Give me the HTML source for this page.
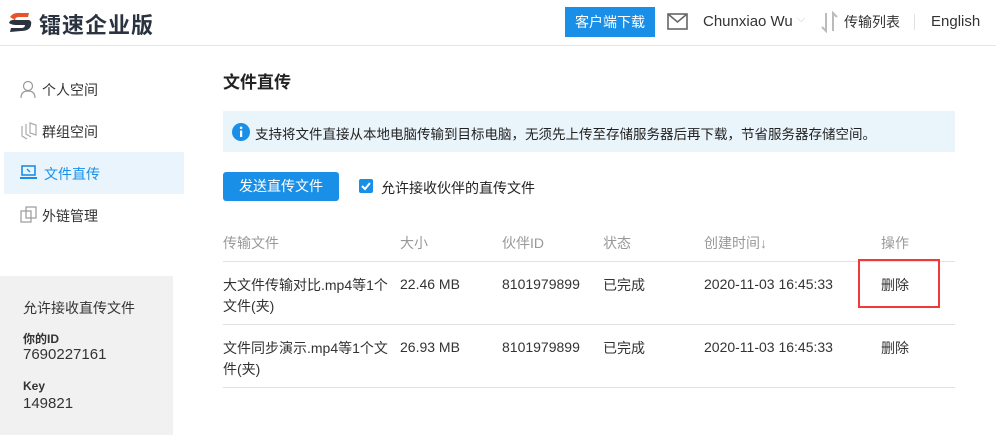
<!DOCTYPE html>
<html><head><meta charset="utf-8"><style>
*{margin:0;padding:0;box-sizing:border-box}
body{width:996px;height:442px;background:#fff;font-family:"Liberation Sans","Noto Sans CJK SC",sans-serif;color:#333;font-size:14px;position:relative;overflow:hidden}
.a{position:absolute;white-space:nowrap}
.hdr{position:absolute;left:0;top:0;width:996px;height:46px;border-bottom:1px solid #e6e6e6}
.th{color:#999;font-size:14px}
.line{position:absolute;left:223px;width:732px;height:1px;background:#e2e2e2}
.n{margin-top:2px}
</style></head><body>
<div class="hdr"></div>
<svg class="a" style="left:7px;top:11px" width="26" height="24" viewBox="0 0 26 24"><path d="M3 6 Q6 1 14 2 L22 2 L21 6 L12 6 Q8 6 8 9Z" fill="#e8542a"/><path d="M2 12 Q3 8 10 9 L22 9 Q25 10 24 14 Q23 20 14 20 L3 21 L4 17 L14 17 Q18 17 18 14 L9 14 Q5 14 2 12Z" fill="#2b3240"/></svg>
<div class="a" style="left:39px;top:8px;font-size:22px;font-weight:bold;color:#2b3240;letter-spacing:1px">镭速企业版</div>
<div class="a" style="left:565px;top:7px;width:90px;height:30px;background:#1a8fe8;color:#fff;font-size:14px;line-height:30px;text-align:center">客户端下载</div>
<svg class="a" style="left:667px;top:13px" width="21" height="17" viewBox="0 0 21 17"><rect x="1" y="1" width="19" height="15" fill="none" stroke="#666" stroke-width="1.6"/><path d="M1 1 L10.5 9 L20 1" fill="none" stroke="#666" stroke-width="1.6"/></svg>
<div class="a" style="left:703px;top:13px;font-size:15px;color:#333">Chunxiao Wu</div>
<div class="a" style="left:797px;top:13px;font-size:11px;color:#ccc">⌵</div>
<svg class="a" style="left:820px;top:11px" width="20" height="22" viewBox="0 0 20 22"><path d="M6 2 V20 L2 16 M13 20 V2 L17 6" fill="none" stroke="#bbb" stroke-width="2"/></svg>
<div class="a" style="left:844px;top:12px;font-size:14px">传输列表</div>
<div class="a" style="left:914px;top:14px;width:1px;height:16px;background:#e0e0e0"></div>
<div class="a" style="left:931px;top:13px;font-size:15px">English</div>

<svg class="a" style="left:20px;top:80px" width="16" height="18" viewBox="0 0 16 18"><circle cx="8" cy="6" r="4.5" fill="none" stroke="#999" stroke-width="1.2"/><path d="M1 18 Q1 11 8 11 Q15 11 15 18" fill="none" stroke="#999" stroke-width="1.2"/></svg>
<div class="a" style="left:42px;top:80px">个人空间</div>
<svg class="a" style="left:20px;top:122px" width="18" height="18" viewBox="0 0 18 18"><path d="M2 4 V14 L7 17 M6 2 V12 L11 15 M10 1 L16 3 V13 L10 11Z" fill="none" stroke="#aaa" stroke-width="1.2"/></svg>
<div class="a" style="left:42px;top:122px">群组空间</div>
<div class="a" style="left:4px;top:152px;width:180px;height:42px;background:#e9f4fd"></div>
<svg class="a" style="left:20px;top:165px" width="17" height="15" viewBox="0 0 17 15"><rect x="2" y="1" width="13" height="9" fill="none" stroke="#1a8fe8" stroke-width="1.6"/><path d="M0 13 H17" stroke="#1a8fe8" stroke-width="2"/><path d="M7 4 L10 7" stroke="#1a8fe8" stroke-width="1.4"/></svg>
<div class="a" style="left:44px;top:164px;color:#1a8fe8">文件直传</div>
<svg class="a" style="left:20px;top:206px" width="17" height="17" viewBox="0 0 17 17"><rect x="1" y="5" width="10" height="11" fill="none" stroke="#999" stroke-width="1.2"/><rect x="6" y="1" width="10" height="11" fill="none" stroke="#999" stroke-width="1.2"/></svg>
<div class="a" style="left:42px;top:206px">外链管理</div>
<div class="a" style="left:0;top:276px;width:173px;height:159px;background:#f1f1f1"></div>
<div class="a" style="left:23px;top:298px;font-size:14px">允许接收直传文件</div>
<div class="a" style="left:23px;top:330px;font-size:12px;font-weight:bold">你的ID</div>
<div class="a" style="left:23px;top:346px;font-size:15px">7690227161</div>
<div class="a" style="left:23px;top:379px;font-size:12px;font-weight:bold">Key</div>
<div class="a" style="left:23px;top:395px;font-size:15px">149821</div>

<div class="a" style="left:223px;top:68px;font-size:17px;font-weight:bold;color:#222">文件直传</div>
<div class="a" style="left:223px;top:111px;width:732px;height:41px;background:#eaf4fb"></div>
<svg class="a" style="left:232px;top:123px" width="18" height="18" viewBox="0 0 18 18"><circle cx="9" cy="9" r="9" fill="#1a8fe8"/><rect x="8" y="7.5" width="2.2" height="6.5" fill="#fff"/><circle cx="9.1" cy="4.8" r="1.3" fill="#fff"/></svg>
<div class="a" style="left:255px;top:123px;font-size:13.5px;color:#222">支持将文件直接从本地电脑传输到目标电脑，无须先上传至存储服务器后再下载，节省服务器存储空间。</div>
<div class="a" style="left:223px;top:172px;width:116px;height:29px;background:#1a8fe8;border-radius:3px;color:#fff;font-size:14px;line-height:29px;text-align:center">发送直传文件</div>
<div class="a" style="left:359px;top:179px;width:14px;height:14px;background:#1a8fe8;border-radius:2px"></div>
<svg class="a" style="left:359px;top:179px" width="14" height="14" viewBox="0 0 14 14"><path d="M3 7 L6 10 L11 4" fill="none" stroke="#fff" stroke-width="2"/></svg>
<div class="a" style="left:381px;top:178px;font-size:14px;color:#222">允许接收伙伴的直传文件</div>

<div class="a th" style="left:223px;top:233px">传输文件</div>
<div class="a th" style="left:400px;top:233px">大小</div>
<div class="a th" style="left:502px;top:233px">伙伴ID</div>
<div class="a th" style="left:603px;top:233px">状态</div>
<div class="a th" style="left:704px;top:233px">创建时间↓</div>
<div class="a th" style="left:881px;top:233px">操作</div>
<div class="line" style="top:261px"></div>
<div class="a" style="left:223px;top:275px;line-height:21px">大文件传输对比.mp4等1个<br>文件(夹)</div>
<div class="a" style="left:400px;top:276px">22.46 MB</div>
<div class="a" style="left:502px;top:276px">8101979899</div>
<div class="a" style="left:603px;top:275px">已完成</div>
<div class="a" style="left:704px;top:276px">2020-11-03 16:45:33</div>
<div class="a" style="left:858px;top:259px;width:82px;height:49px;border:2px solid #f03a3a"></div>
<div class="a" style="left:881px;top:275px">删除</div>
<div class="line" style="top:324px"></div>
<div class="a" style="left:223px;top:338px;line-height:21px">文件同步演示.mp4等1个文<br>件(夹)</div>
<div class="a" style="left:400px;top:339px">26.93 MB</div>
<div class="a" style="left:502px;top:339px">8101979899</div>
<div class="a" style="left:603px;top:338px">已完成</div>
<div class="a" style="left:704px;top:339px">2020-11-03 16:45:33</div>
<div class="a" style="left:881px;top:338px">删除</div>
<div class="line" style="top:387px"></div>
</body></html>
